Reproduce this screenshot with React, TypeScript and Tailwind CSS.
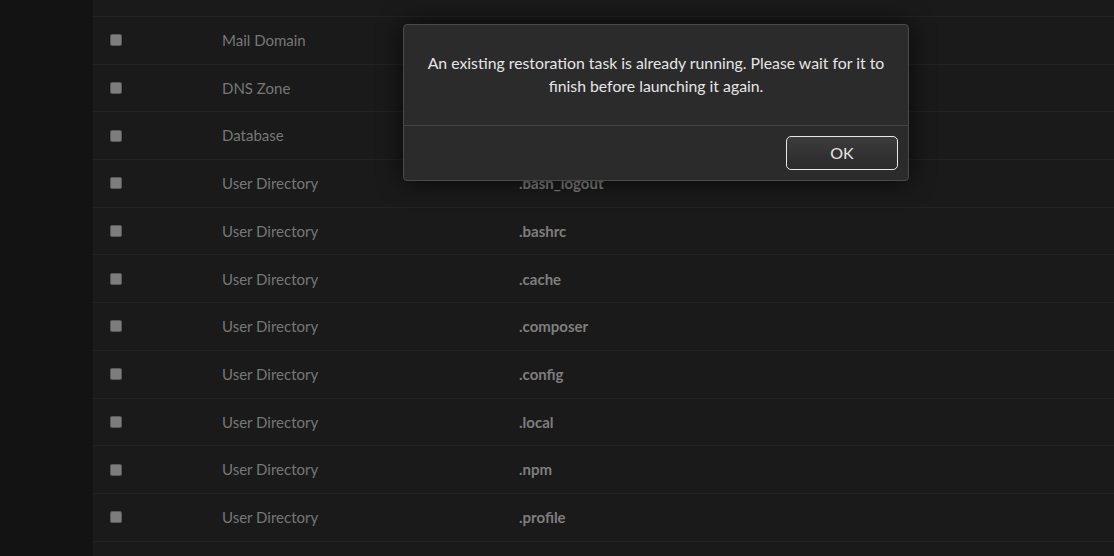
import React from "react";

const rows: [string, string][] = [
  ["Mail Domain", ""],
  ["DNS Zone", ""],
  ["Database", ""],
  ["User Directory", ".bash_logout"],
  ["User Directory", ".bashrc"],
  ["User Directory", ".cache"],
  ["User Directory", ".composer"],
  ["User Directory", ".config"],
  ["User Directory", ".local"],
  ["User Directory", ".npm"],
  ["User Directory", ".profile"],
];

export default function App() {
  return (
    <div
      className="relative w-[1114px] h-[556px] overflow-hidden bg-[#131313] flex"
      style={{ fontFamily: "Lato, 'Open Sans', sans-serif" }}
    >
      <div className="w-[93px] shrink-0" />
      <div className="flex-1 bg-[#1a1a1a] flex flex-col">
        <div className="h-[17px] shrink-0 border-b border-[#222222]" />
        {rows.map(([type, name], i) => (
          <div
            key={i}
            className="h-[47.7px] shrink-0 flex items-center border-b border-[#222222]"
          >
            <div className="w-[17px] shrink-0" />
            <div className="w-[12px] h-[12px] shrink-0 rounded-[2px] bg-[#7d7d7d] border border-[#5a5a5a]" />
            <div className="w-[100px] shrink-0" />
            <div className="w-[297px] shrink-0 text-[15px] text-[#777777]">{type}</div>
            <div className="text-[15px] font-bold text-[#7e7e7e]">{name}</div>
          </div>
        ))}
      </div>

      <div className="absolute left-[403px] top-[24px] w-[506px] h-[157px] bg-[#2b2b2b] border border-[#4a4a4a] rounded-[4px] shadow-[0_0_24px_rgba(0,0,0,0.7)] flex flex-col">
        <div className="h-[100px] flex items-center justify-center px-[16px] pb-[2px] text-center text-[15.8px] leading-[23px] text-[#e6e6e6]">
          An existing restoration task is already running. Please wait for it to finish before launching it again.
        </div>
        <div className="flex-1 border-t border-[#444444] flex items-center justify-end pr-[10px]">
          <button className="w-[112px] h-[34px] rounded-[5px] border border-[#e8e8e8] bg-gradient-to-b from-[#3c3c3c] to-[#2a2a2a] text-[16px] text-[#e6e6e6]">
            OK
          </button>
        </div>
      </div>
    </div>
  );
}
